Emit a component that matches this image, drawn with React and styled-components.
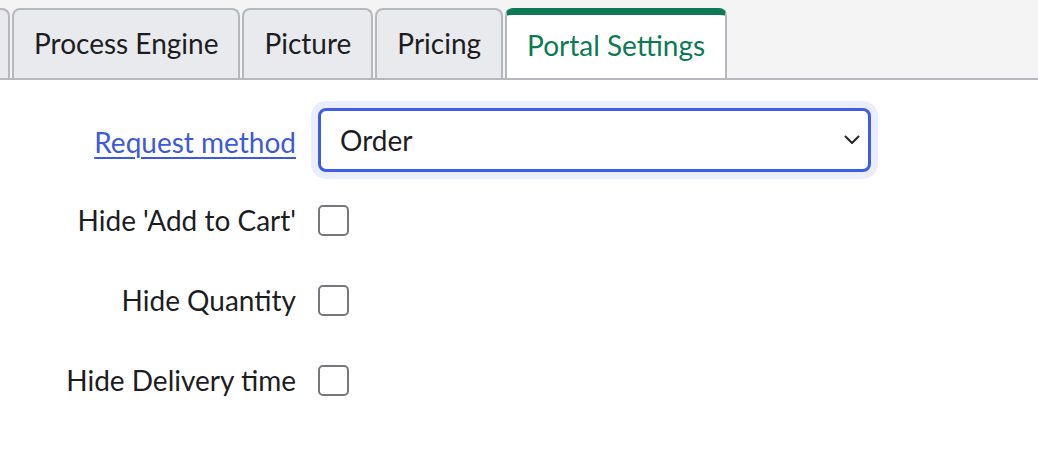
import React from "react";
import styled, { createGlobalStyle } from "styled-components";

const GlobalStyle = createGlobalStyle`
  body {
    margin: 0;
    background: #ffffff;
    font-family: Lato, "Open Sans", sans-serif;
    color: #1d1d1f;
  }
`;

const TabBar = styled.div`
  box-sizing: border-box;
  height: 80px;
  background: #f4f4f5;
  border-bottom: 2px solid #b6b8bd;
  display: flex;
  align-items: flex-end;
  gap: 2px;
  overflow: hidden;
`;

const Tab = styled.div`
  box-sizing: border-box;
  height: ${(p) => (p.$active ? "72px" : "70px")};
  margin-bottom: ${(p) => (p.$active ? "-2px" : "0")};
  padding: ${(p) => (p.$active ? "0 20px 6px" : "0 20px 2px")};
  display: flex;
  align-items: center;
  border: 2px solid #b6b8bd;
  border-top: ${(p) => (p.$active ? "7px solid #0b7a55" : "2px solid #b6b8bd")};
  border-bottom: none;
  border-radius: 8px 8px 0 0;
  background: ${(p) => (p.$active ? "#ffffff" : "#e9eaed")};
  color: ${(p) => (p.$active ? "#0b7a55" : "#1d1d1f")};
  font-size: 28px;
  white-space: nowrap;
  flex-shrink: 0;
`;

const EdgeTab = styled(Tab)`
  width: 30px;
  margin-left: -20px;
  padding: 0;
`;

const Form = styled.div`
  padding-top: 20px;
  display: grid;
  grid-template-columns: 296px auto;
  grid-auto-rows: 80px;
  column-gap: 22px;
  align-items: center;
`;

const Label = styled.div`
  text-align: right;
  font-size: 28px;
  color: #1d1d1f;
  padding-top: ${(p) => (p.$link ? "3px" : "0")};
`;

const LabelLink = styled.a`
  color: #3d5ad8;
  text-decoration: underline;
  text-underline-offset: 4px;
  text-decoration-thickness: 2px;
  cursor: pointer;
`;

const SelectBox = styled.div`
  box-sizing: border-box;
  width: 553px;
  height: 64px;
  border: 3px solid #3f5de0;
  border-radius: 8px;
  box-shadow: 0 0 0 7px #eaedfb;
  background: #ffffff;
  display: flex;
  align-items: center;
  justify-content: space-between;
  padding: 0 8px 0 19px;
  font-size: 28px;
  color: #1d1d1f;
`;

const Checkbox = styled.div`
  box-sizing: border-box;
  width: 31px;
  height: 31px;
  border: 2px solid #74777c;
  border-radius: 5px;
  background: #ffffff;
`;

const Chevron = () => (
  <svg width="16" height="10" viewBox="0 0 16 10">
    <polyline
      points="1.5,1.5 8,8 14.5,1.5"
      fill="none"
      stroke="#222"
      strokeWidth="2"
      strokeLinecap="round"
      strokeLinejoin="round"
    />
  </svg>
);

const checks = ["Hide 'Add to Cart'", "Hide Quantity", "Hide Delivery time"];

const App = () => (
  <>
    <GlobalStyle />
    <TabBar>
      <EdgeTab />
      <Tab>Process Engine</Tab>
      <Tab>Picture</Tab>
      <Tab>Pricing</Tab>
      <Tab $active>Portal Settings</Tab>
    </TabBar>
    <Form>
      <Label $link>
        <LabelLink>Request method</LabelLink>
      </Label>
      <SelectBox>
        <span>Order</span>
        <Chevron />
      </SelectBox>
      {checks.map((c) => (
        <React.Fragment key={c}>
          <Label>{c}</Label>
          <Checkbox />
        </React.Fragment>
      ))}
    </Form>
  </>
);

export default App;
